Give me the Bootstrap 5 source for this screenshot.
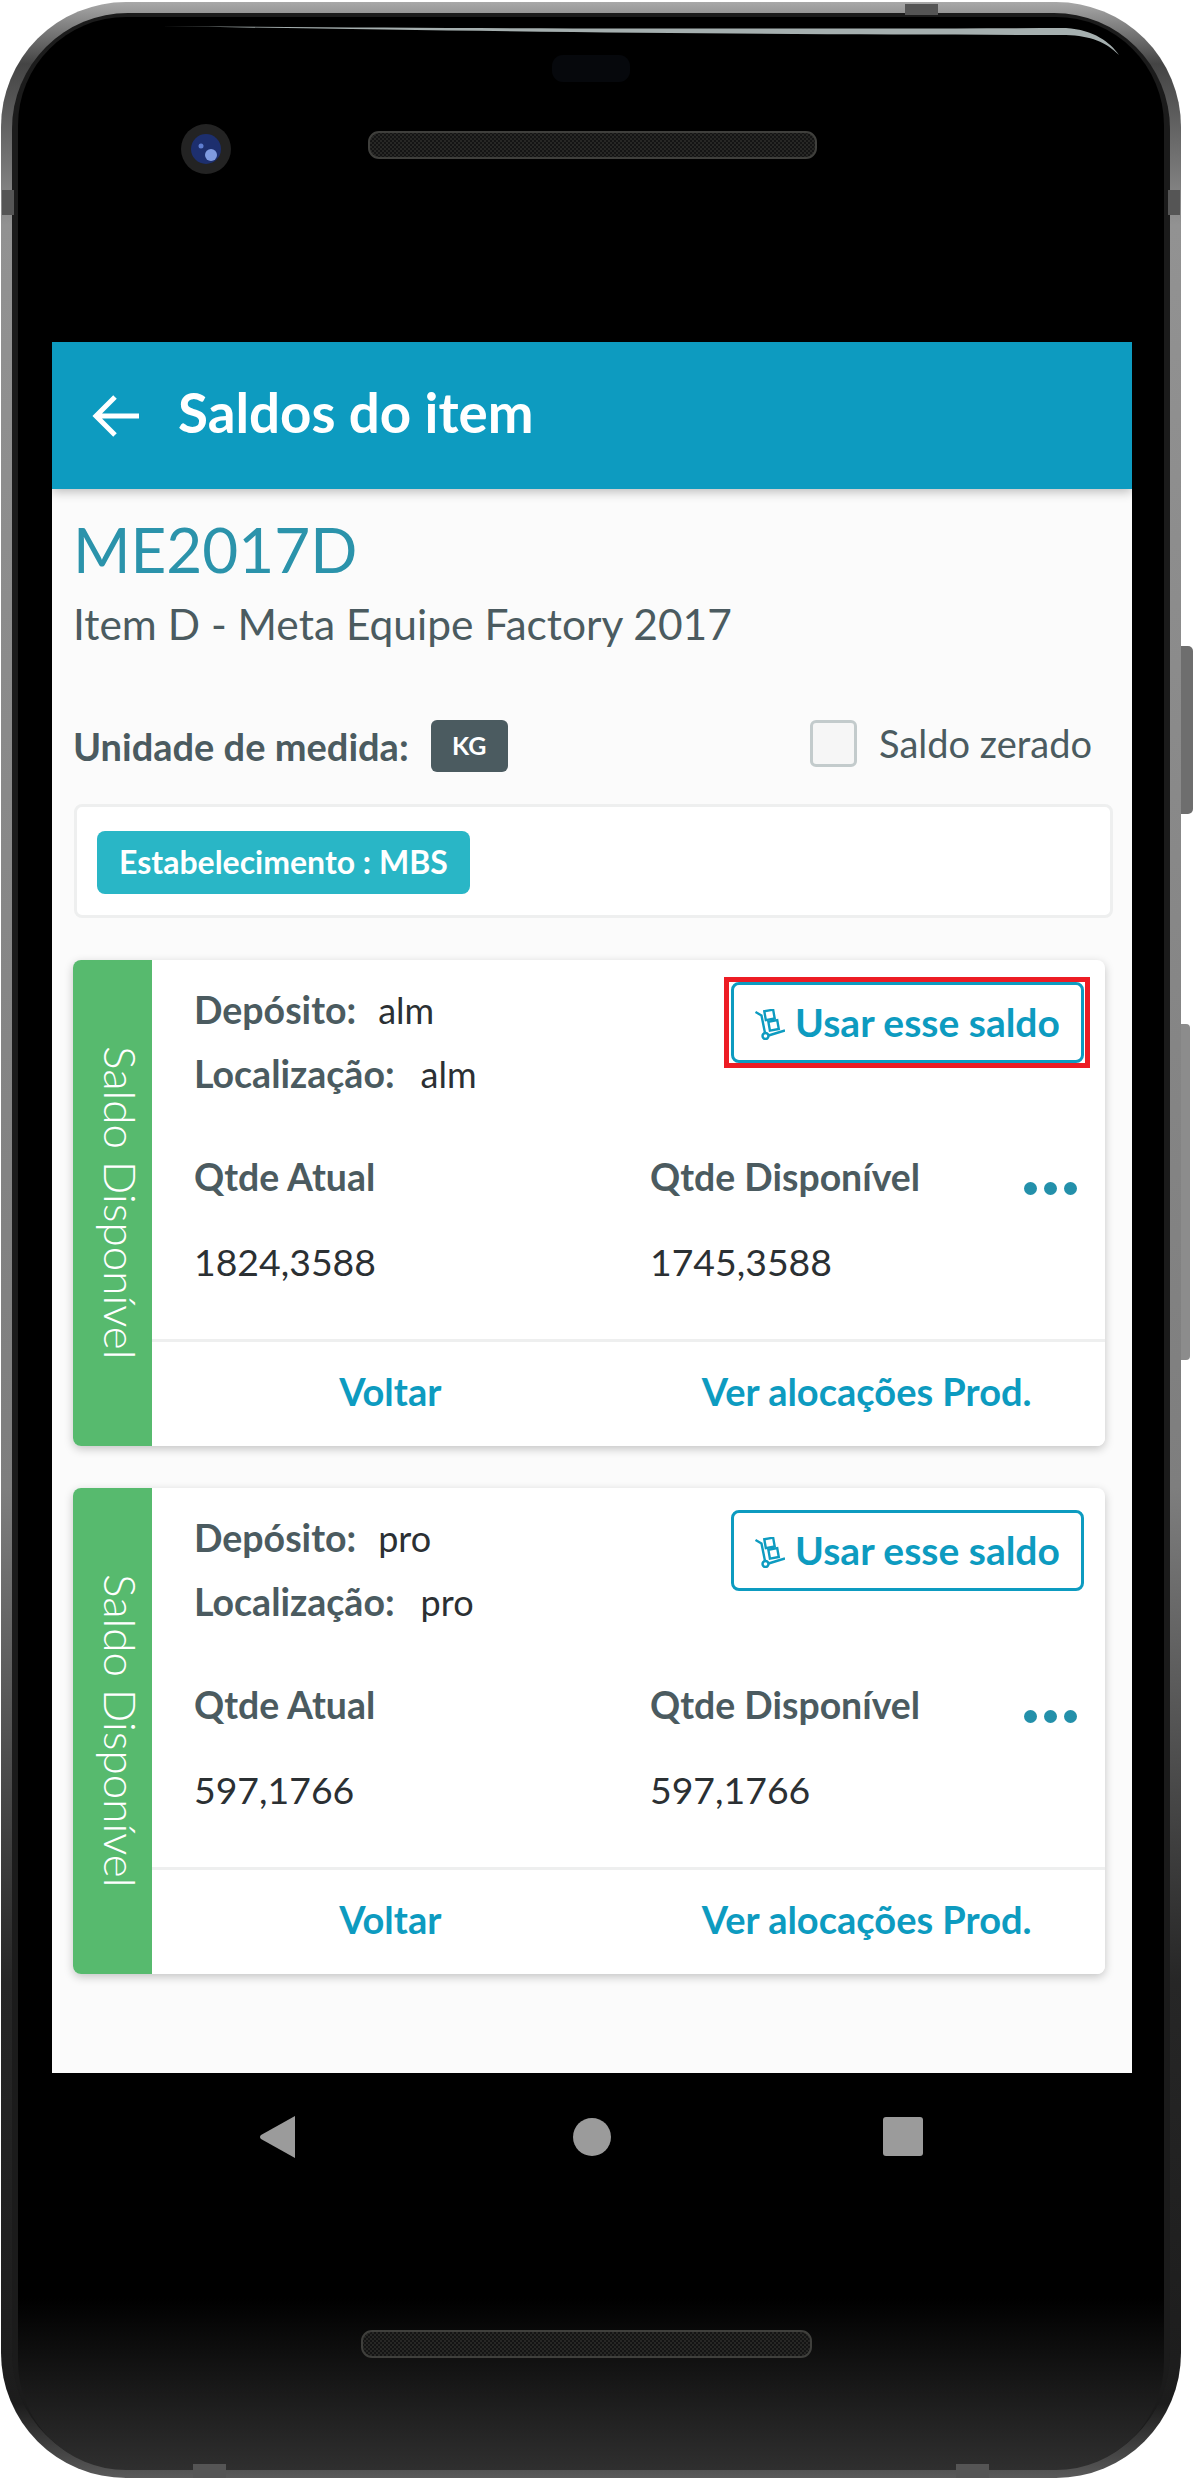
<!DOCTYPE html>
<html lang="pt-BR">

<head>
    <meta charset="UTF-8">
    <meta name="viewport" content="width=device-width, initial-scale=1.0">
    <title>Saldos do item</title>
    <link href="https://cdn.jsdelivr.net/npm/bootstrap@5.3.2/dist/css/bootstrap.min.css" rel="stylesheet">
    <style>
        body { margin: 0; background: #fff; font-family: Lato, "Noto Sans", sans-serif; color: #4b5b60; }
        .device { position: relative; width: 1194px; height: 2480px; }
        .device-art { position: absolute; left: 0; top: 0; }
        .device-screen { position: relative; display: flex; flex-direction: column; width: 1080px; height: 1731px; margin-left: 52px; top: 342px; background: #fbfbfb; }
        .app-bar { height: 147px; padding: 0 0 0 40px; background: #0d9bc0; box-shadow: 0 3px 10px rgba(0, 0, 0, .25); }
        .app-bar .navbar-brand { margin: 0 0 0 38px; padding: 0 0 6px; font-size: 54.7px; font-weight: 700; color: #fff; line-height: 1; }
        .screen-body { padding: 0 19px 0 22px; }
        .item-code { margin: 22px 0 0 -1px; font-size: 62px; font-weight: 400; line-height: 76px; color: #2b93ab; }
        .item-name { margin: 13px 0 0 -1px; font-size: 42.5px; line-height: 48px; color: #4b5b60; }
        .unit-row { height: 52px; margin-top: 72px; }
        .unit-label { margin-left: -1px; font-size: 38px; font-weight: 700; }
        .unit-badge { width: 77px; height: 52px; margin-left: 22px; border-radius: 6px; background: #4b5b60; font-size: 25px; font-weight: 700; color: #fff; }
        .zero-check { gap: 22px; margin: 0 21px 5px 0; font-size: 38px; }
        .zero-check .form-check-input { width: 47px; height: 47px; margin: 0; border: 3px solid #c3cbcc; border-radius: 6px; background-color: #f6f6f6; }
        .zero-check .form-check-label { line-height: 47px; }
        .branch-box { height: 114px; margin-top: 32px; padding: 2px 21px 0 20px; border: 3px solid #eeefef; border-radius: 8px; background: #fff; }
        .branch-tag { height: 63px; padding: 0 22px; border-radius: 8px; background: #29b6c6; font-size: 32px; font-weight: 700; color: #fff; }
        .balance-card { height: 486px; margin: 42px 8px 0 -1px; border: 0; border-radius: 8px; overflow: hidden; box-shadow: 0 3px 10px rgba(0, 0, 0, .22); }
        .balance-card + .balance-card { margin-top: 42px; }
        .balance-side { width: 79px; flex: none; padding-left: 17px; writing-mode: vertical-rl; background: #57ba6e; font-size: 44px; font-weight: 300; line-height: 1; color: #fff; }
        .balance-main { min-width: 0; }
        .balance-card .card-body { flex: none; height: 379px; padding: 18px 21px 0 42px; }
        .info-line { font-size: 36px; line-height: 64px; color: #2b3033; white-space: nowrap; }
        .info-line b { margin-right: 22px; font-size: 37.5px; font-weight: 700; color: #4b5b60; }
        .info-line b.is-wide { margin-right: 26px; }
        .use-btn { --bs-btn-padding-x: 0; --bs-btn-padding-y: 0; width: 353px; height: 81px; margin-top: 4px; border: 3px solid #0d9bc0; border-radius: 8px; background: #fff; font-size: 39px; font-weight: 700; color: #0d9bc0; white-space: nowrap; }
        .use-btn svg { width: 30px; height: 31px; margin: 4px 10px 0 0; }
        .use-btn.is-marked { position: relative; }
        .use-btn.is-marked::after { content: ""; position: absolute; inset: -8px -9px -8px -10px; border: 5px solid #ed1c24; }
        .qty-row { margin-top: 46px; }
        .qty-col { width: 456px; flex: none; }
        .qty-col + .qty-col { width: auto; flex: 1 1 0; }
        .qty-title { font-size: 37.4px; font-weight: 700; line-height: 50px; color: #4b5b60; white-space: nowrap; }
        .qty-value { margin-top: 35px; font-size: 37.4px; line-height: 50px; color: #2b3033; }
        .more-dots { gap: 7px; margin: 30px 7px 0 0; }
        .more-dots span { width: 13px; height: 13px; border-radius: 50%; background: #2390aa; }
        .balance-card .card-footer { height: 107px; padding: 0 0 6px; border-top: 3px solid #eeefef; background: #fff; }
        .balance-card .card-footer .btn { --bs-btn-padding-x: 0; --bs-btn-padding-y: 0; width: 50%; border: 0; font-size: 38px; font-weight: 700; color: #0d9bc0; white-space: nowrap; }
        .soft-keys { position: relative; top: 342px; height: 127px; padding: 0 271px 0 259px; }
        .key-home { margin-left: 6px; }
    </style>
</head>

<body>
    <div class="device">
        <!-- corpo do aparelho -->
        <svg class="device-art" width="1194" height="2480" viewBox="0 0 1194 2480">
            <defs>
                <linearGradient id="metal" x1="0" y1="0" x2="0" y2="1">
                    <stop offset="0" stop-color="#a8a8a8" />
                    <stop offset=".025" stop-color="#444" />
                    <stop offset=".09" stop-color="#929292" />
                    <stop offset=".6" stop-color="#7e7e7e" />
                    <stop offset=".8" stop-color="#262626" />
                    <stop offset=".97" stop-color="#1c1c1c" />
                    <stop offset="1" stop-color="#5a5a5a" />
                </linearGradient>
                <linearGradient id="chin" x1="0" y1="0" x2="0" y2="1">
                    <stop offset="0" stop-color="#000" />
                    <stop offset=".93" stop-color="#000" />
                    <stop offset="1" stop-color="#2f2f2f" />
                </linearGradient>
                <pattern id="grille" width="4" height="4" patternUnits="userSpaceOnUse">
                    <rect width="4" height="4" fill="#141414" />
                    <path d="M0 1h2M2 3h2" stroke="#3a3a36" stroke-width="1" />
                </pattern>
            </defs>
            <rect x="1176" y="646" width="17" height="168" rx="5" fill="#6e6e6e" />
            <rect x="1176" y="1024" width="14" height="336" rx="4" fill="#8c8c8c" />
            <rect x="1" y="2" width="1180" height="2476" rx="125" fill="url(#metal)" />
            <rect x="12" y="13" width="1158" height="2456" rx="116" fill="#1b1b1b" />
            <rect x="18" y="17" width="1146" height="2453" rx="108" fill="url(#chin)" />
            <path d="M905 4h33v11h-33zM193 2464h33v14h-33zM956 2464h33v14h-33zM2 190h12v25H2zM1168 190h12v25h-12z" fill="#555" />
            <path d="M160 26C500 29 800 29 1066 28c28 2 44 14 53 27-13-13-28-19-53-20C800 35 500 32 160 26z" fill="#a5afaf" />
            <rect x="552" y="55" width="78" height="27" rx="11" fill="#06080c" />
            <circle cx="206" cy="149" r="25" fill="#232323" />
            <circle cx="206" cy="149" r="15" fill="#1d2f6e" />
            <circle cx="211" cy="155" r="6" fill="#7f9be0" />
            <circle cx="201" cy="146" r="2.5" fill="#5f7ed0" />
            <rect x="369" y="132" width="447" height="26" rx="10" fill="url(#grille)" stroke="#3f3f3c" stroke-width="2" />
            <rect x="362" y="2331" width="449" height="26" rx="10" fill="url(#grille)" stroke="#3f3f3c" stroke-width="2" />
        </svg>

        <div class="device-screen">
            <nav class="navbar app-bar flex-nowrap justify-content-start">
                <svg width="48" height="42" viewBox="0 0 48 42" fill="none" stroke="#fff" stroke-width="5">
                    <path d="M47 21H4M23 2 4 21l19 19" />
                </svg>
                <span class="navbar-brand">Saldos do item</span>
            </nav>

            <div class="screen-body">
                <h1 class="item-code">ME2017D</h1>
                <p class="item-name">Item D - Meta Equipe Factory 2017</p>

                <div class="unit-row d-flex align-items-center">
                    <span class="unit-label">Unidade de medida:</span>
                    <span class="unit-badge d-flex align-items-center justify-content-center">KG</span>
                    <div class="zero-check d-flex align-items-center ms-auto">
                        <input class="form-check-input" type="checkbox" id="saldoZerado">
                        <label class="form-check-label" for="saldoZerado">Saldo zerado</label>
                    </div>
                </div>

                <div class="branch-box d-flex align-items-center">
                    <span class="branch-tag d-flex align-items-center">Estabelecimento : MBS</span>
                </div>

                <div class="card balance-card flex-row">
                    <div class="balance-side d-flex align-items-center justify-content-center">Saldo Disponível</div>
                    <div class="balance-main flex-grow-1 d-flex flex-column">
                        <div class="card-body">
                            <div class="d-flex justify-content-between align-items-start">
                                <div>
                                    <div class="info-line"><b>Depósito:</b>alm</div>
                                    <div class="info-line"><b class="is-wide">Localização:</b>alm</div>
                                </div>
                                <button type="button" class="btn use-btn is-marked d-flex align-items-center justify-content-center">
                                    <svg viewBox="0 0 30 31" fill="none" stroke="#0d9bc0" stroke-width="2.4">
                                        <path d="M.5 3 6.500 6.500 10 24M13.500 26.500 30 21.500" />
                                        <circle cx="10.500" cy="27" r="3" />
                                        <rect x="10" y="1.500" width="9" height="9" transform="rotate(-10 14 6)" />
                                        <rect x="14" y="12" width="9" height="9" transform="rotate(-10 18 16)" />
                                    </svg>
                                    Usar esse saldo
                                </button>
                            </div>
                            <div class="qty-row d-flex">
                                <div class="qty-col">
                                    <div class="qty-title">Qtde Atual</div>
                                    <div class="qty-value">1824,3588</div>
                                </div>
                                <div class="qty-col">
                                    <div class="qty-title">Qtde Disponível</div>
                                    <div class="qty-value">1745,3588</div>
                                </div>
                                <div class="more-dots d-flex align-self-start"><span></span><span></span><span></span></div>
                            </div>
                        </div>
                        <div class="card-footer d-flex align-items-center">
                            <button type="button" class="btn">Voltar</button>
                            <button type="button" class="btn">Ver alocações Prod.</button>
                        </div>
                    </div>
                </div>

                <div class="card balance-card flex-row">
                    <div class="balance-side d-flex align-items-center justify-content-center">Saldo Disponível</div>
                    <div class="balance-main flex-grow-1 d-flex flex-column">
                        <div class="card-body">
                            <div class="d-flex justify-content-between align-items-start">
                                <div>
                                    <div class="info-line"><b>Depósito:</b>pro</div>
                                    <div class="info-line"><b class="is-wide">Localização:</b>pro</div>
                                </div>
                                <button type="button" class="btn use-btn d-flex align-items-center justify-content-center">
                                    <svg viewBox="0 0 30 31" fill="none" stroke="#0d9bc0" stroke-width="2.4">
                                        <path d="M.5 3 6.500 6.500 10 24M13.500 26.500 30 21.500" />
                                        <circle cx="10.500" cy="27" r="3" />
                                        <rect x="10" y="1.500" width="9" height="9" transform="rotate(-10 14 6)" />
                                        <rect x="14" y="12" width="9" height="9" transform="rotate(-10 18 16)" />
                                    </svg>
                                    Usar esse saldo
                                </button>
                            </div>
                            <div class="qty-row d-flex">
                                <div class="qty-col">
                                    <div class="qty-title">Qtde Atual</div>
                                    <div class="qty-value">597,1766</div>
                                </div>
                                <div class="qty-col">
                                    <div class="qty-title">Qtde Disponível</div>
                                    <div class="qty-value">597,1766</div>
                                </div>
                                <div class="more-dots d-flex align-self-start"><span></span><span></span><span></span></div>
                            </div>
                        </div>
                        <div class="card-footer d-flex align-items-center">
                            <button type="button" class="btn">Voltar</button>
                            <button type="button" class="btn">Ver alocações Prod.</button>
                        </div>
                    </div>
                </div>
            </div>
        </div>

        <!-- botoes do android -->
        <div class="soft-keys d-flex justify-content-between align-items-center">
            <svg width="36" height="42" viewBox="0 0 36 42" fill="#9b9b9b"><path d="M36 0v42L2 23q-2-2 0-4z" /></svg>
            <svg class="key-home" width="38" height="38" viewBox="0 0 38 38" fill="#9b9b9b"><circle cx="19" cy="19" r="19" /></svg>
            <svg width="40" height="39" viewBox="0 0 40 39" fill="#9b9b9b"><rect width="40" height="39" rx="3" /></svg>
        </div>
    </div>
</body>

</html>
